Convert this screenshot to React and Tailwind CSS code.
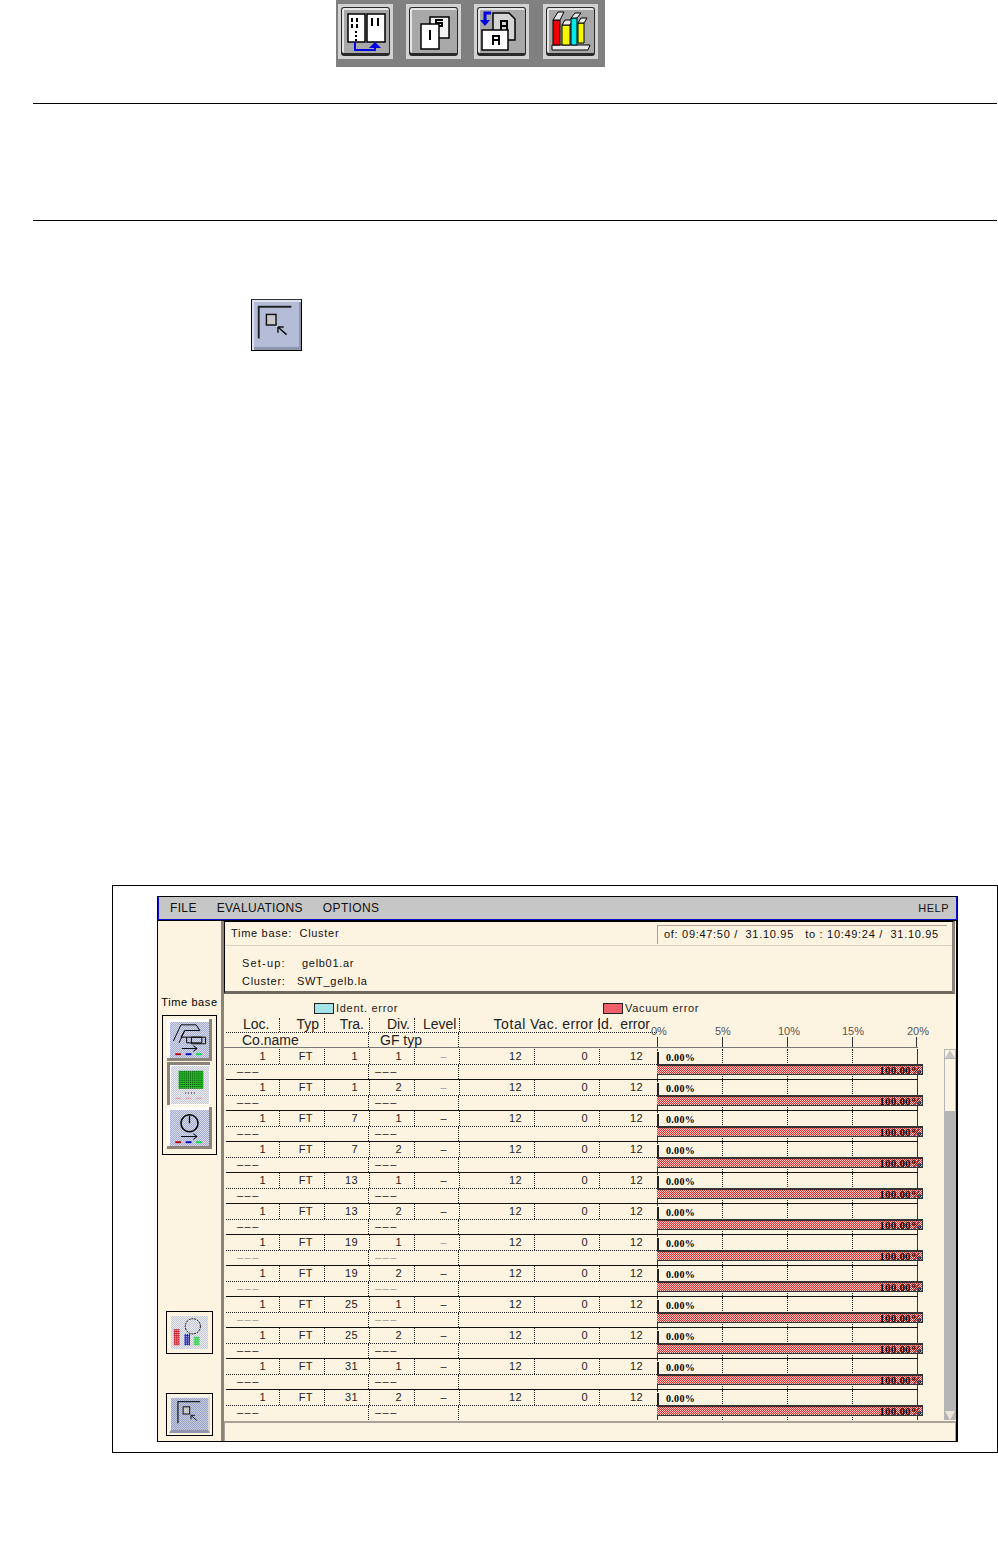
const rows = [
  ["1", "1", "1"], ["1", "1", "2"], ["1", "7", "1"], ["1", "7", "2"],
  ["1", "13", "1"], ["1", "13", "2"], ["1", "19", "1"], ["1", "19", "2"],
  ["1", "25", "1"], ["1", "25", "2"], ["1", "31", "1"], ["1", "31", "2"],
];

const font = "font-['Liberation_Sans',Arial,sans-serif]";
const checker = "bg-[repeating-conic-gradient(#e8262a_0_25%,#fbd0c8_0_50%)] bg-[length:2px_2px]";
const blueDither = "bg-[repeating-conic-gradient(#a4aed6_0_25%,#d6d8e4_0_50%)] bg-[length:2px_2px]";
const paleDither = "bg-[repeating-conic-gradient(#c2c8e2_0_25%,#eeeae6_0_50%)] bg-[length:2px_2px]";
const darkDither = "bg-[repeating-conic-gradient(#98a4cc_0_25%,#c4cad8_0_50%)] bg-[length:2px_2px]";

// whole tile is drawn in the svg, 55x55 with the light frame round it
const ToolTile = ({ children, className = "" }) => (
  <svg viewBox="0 0 55 55" className={`h-[55px] w-[55px] shrink-0 ${className}`}>
    <rect width="55" height="55" fill="#d2d2d2" />
    <rect x="3" y="3" width="49" height="49" rx="3" fill="#2a2a2a" />
    <rect x="4" y="4" width="47" height="45" rx="2" fill="#e4e4e4" />
    <rect x="6" y="6" width="45" height="43" fill="#a8a8a8" />
    {children}
  </svg>
);

const ToolIcons = () => (
  <div className="ml-[336px] flex h-[67px] w-[269px] items-start gap-[13px] bg-[#808080] pl-[2px] pt-[4px]">
    <ToolTile>
      <path d="M10 10H27V38H10zM29 10H47V38H29z" fill="#fff" stroke="#000" strokeWidth="1.5" />
      <path d="M13 14h2v4h-2zM18 14h2v4h-2zM13 20h2v4h-2zM18 20h2v4h-2zM17 27h2v2h-2zM17 31h2v2h-2zM17 35h2v2h-2zM33 14h2v8h-2zM39 14h2v8h-2z" fill="#000" />
      <path d="M17 38V46H37V42" fill="none" stroke="#0000e0" strokeWidth="2" />
      <path d="M31 44L37 38L43 44z" fill="#0000e0" />
    </ToolTile>
    <ToolTile>
      <path d="M24 13H43V34H24z" fill="#f0f0f0" stroke="#000" strokeWidth="1.5" />
      <path d="M29 15h8v2h-6v1h6v5h-8v-2h6v-1h-6z" fill="#000" />
      <path d="M15 20H33V45H15z" fill="#fff" stroke="#000" strokeWidth="1.5" />
      <path d="M23 26h2v10h-2z" fill="#000" />
    </ToolTile>
    <ToolTile>
      <path d="M19 9H35L41 15V36H19z" fill="#d4d4d4" stroke="#000" strokeWidth="1.5" />
      <path d="M26 16h8v12h-2v-5h-4v5h-2zM28 18v3h4v-3z" fill="#000" />
      <path d="M8 26H34V46H8z" fill="#fff" stroke="#000" strokeWidth="1.5" />
      <path d="M18 31h8v10h-2v-4h-4v4h-2zM20 33v2h4v-2z" fill="#000" />
      <path d="M17 9H11V16" fill="none" stroke="#0000e0" strokeWidth="3" />
      <path d="M6 16H16L11 22z" fill="#0000e0" />
    </ToolTile>
    <ToolTile className="ml-px">
      <path d="M9 41H47L45 46H9z" fill="#e8e8e8" stroke="#000" />
      <path d="M10 16H17V41H10z" fill="#f00000" stroke="#000" />
      <path d="M10 16L15 8H21L17 16z" fill="#e8e8e8" stroke="#000" />
      <path d="M19 21H27V41H19z" fill="#f6f600" stroke="#000" />
      <path d="M19 21L22 16H30L27 21z" fill="#e8e8e8" stroke="#000" />
      <path d="M28 14H34V41H28z" fill="#00e8e8" stroke="#000" />
      <path d="M28 14L32 9H38L34 14z" fill="#e8e8e8" stroke="#000" />
      <path d="M35 19H41V39H35z" fill="#f6f600" stroke="#000" />
      <path d="M35 19L38 14H44L41 19z" fill="#e8e8e8" stroke="#000" />
    </ToolTile>
  </div>
);

const CornerGlyph = ({ className }) => (
  <svg viewBox="0 0 51 52" className={className}>
    <path d="M7 40V7H41" fill="none" stroke="#222" strokeWidth="2" />
    <rect x="15" y="15" width="10" height="11" fill="#c8c8c8" stroke="#111" strokeWidth="1.5" />
    <path d="M36 36L27 28M27 28V34M27 28H33" fill="none" stroke="#111" strokeWidth="1.5" />
  </svg>
);

const Dots = () => (
  <>
    <rect x="5" y="33" width="6" height="2" fill="#c00000" />
    <rect x="16" y="33" width="6" height="2" fill="#0000c0" />
    <rect x="27" y="33" width="6" height="2" fill="#00e040" />
  </>
);

const StackIcon = ({ pressed, children, className = "" }) => (
  <div className={pressed
    ? `h-[43px] w-[43px] self-start ml-[4px] border-t-[3px] border-l-[3px] border-[#8c8478] bg-white p-[1px] ${className}`
    : `h-[42px] w-[45px] border-r-[3px] border-b-[3px] border-[#8c8478] bg-white pl-[3px] pt-[3px] ${className}`}>
    <div className={`h-full w-full ${pressed ? paleDither : blueDither}`}>
      <svg viewBox="0 0 40 38" className="h-full w-full">{children}</svg>
    </div>
  </div>
);

const Sidebar = () => (
  <div className="flex w-[66px] shrink-0 flex-col items-center border-r-[3px] border-[#8c8478] bg-[#fdf3e1] pt-[75px]">
    <div className="text-[11px] leading-[13px] tracking-[0.6px] whitespace-nowrap text-black">Time base</div>
    <div className="mt-[6px] flex h-[140px] w-[55px] flex-col items-center border border-black pt-[3px]">
      <StackIcon>
        <path d="M3 20L11 3H27L31 9H15L9 22M15 9L11 16H33V22H17V16M22 16H37V23H22z" fill="none" stroke="#000" strokeWidth="1" />
        <path d="M12 28H28M24 25L28 28L24 31" fill="none" stroke="#000" />
        <Dots />
      </StackIcon>
      <StackIcon pressed className="mt-[1px]">
        <defs>
          <pattern id="greenDots" width="2" height="2" patternUnits="userSpaceOnUse">
            <rect width="2" height="2" fill="#24c024" />
            <rect width="1" height="1" fill="#0c3c10" />
          </pattern>
        </defs>
        <rect x="8" y="4" width="26" height="19" fill="url(#greenDots)" />
        <path d="M15 27h1v1h-1zM18 27h1v1h-1zM21 27h1v1h-1zM24 27h1v1h-1z" fill="#000" />
        <path d="M5 33h5M16 33h5M27 33h5" stroke="#e06070" strokeDasharray="1 1" />
      </StackIcon>
      <StackIcon className="mt-[2px]">
        <circle cx="20" cy="14" r="9" fill="none" stroke="#000" strokeWidth="1.6" />
        <path d="M20 14V6" stroke="#000" strokeWidth="1.4" />
        <path d="M11 28H28M24 25L28 28L24 31" fill="none" stroke="#000" />
        <Dots />
      </StackIcon>
    </div>
    <div className="flex-1" />
    <div className="h-[43px] w-[47px] border border-black bg-[#fdf3e1] p-[4px]">
      <div className={`h-full w-full ${paleDither}`}>
        <svg viewBox="0 0 39 33" className="h-full w-full">
          <defs>
            <pattern id="redDots" width="2" height="2" patternUnits="userSpaceOnUse">
              <rect width="2" height="2" fill="#d02030" />
              <rect width="1" height="1" fill="#f0e0e0" />
            </pattern>
            <pattern id="blueDots" width="2" height="2" patternUnits="userSpaceOnUse">
              <rect width="2" height="2" fill="#2020c0" />
              <rect width="1" height="1" fill="#e0e0f0" />
            </pattern>
            <pattern id="limeDots" width="2" height="2" patternUnits="userSpaceOnUse">
              <rect width="2" height="2" fill="#20d040" />
              <rect width="1" height="1" fill="#e0f0e0" />
            </pattern>
          </defs>
          <circle cx="23" cy="10" r="8" fill="none" stroke="#000" strokeDasharray="2 1" />
          <rect x="3" y="13" width="6" height="17" fill="url(#redDots)" />
          <rect x="14" y="18" width="6" height="12" fill="url(#blueDots)" />
          <rect x="24" y="21" width="6" height="9" fill="url(#limeDots)" />
        </svg>
      </div>
    </div>
    <div className="mt-[39px] mb-[5px] h-[43px] w-[47px] border border-black bg-[#fdf3e1] p-[2px]">
      <div className={`flex h-full w-full items-center justify-center border-t-[2px] border-l-[2px] border-r-[2px] border-b-[3px] border-t-[#f2efe8] border-l-[#f2efe8] border-r-[#d8d6d0] border-b-[#8f96ae] ${darkDither}`}>
        <CornerGlyph className="h-[34px] w-[34px]" />
      </div>
    </div>
  </div>
);

const cell = "border-r border-dotted border-[#222]";

const Chart = () => (
  <div className="relative w-[261px] shrink-0">
    <div className="flex h-[30px] border-r border-l border-[#333]">
      <div className="h-full w-[65px] border-r border-dotted border-[#222]" />
      <div className="h-full w-[65px] border-r border-dotted border-[#222]" />
      <div className="h-full w-[65px] border-r border-dotted border-[#222]" />
    </div>
    <div className="absolute left-0 top-[2px] flex items-center bg-[#fdf3e1]">
      <div className="h-[12px] w-[2px] bg-[#222]" />
      <span className="ml-[7px] font-['Liberation_Serif',serif] text-[10px] leading-[13px] font-bold tracking-[0.3px] text-black">0.00%</span>
    </div>
    <div className={`absolute left-0 top-[15px] h-[11px] w-[266px] border-t-[2px] border-r border-b border-[#333] ${checker} text-right font-['Liberation_Serif',serif] text-[11px] leading-[9px] font-bold tracking-[0.2px] text-black`}>100.00%</div>
  </div>
);

const Row = ({ loc, tra, div, index }) => {
  const dimDash = index >= 6 && index <= 8;
  const dimLevel = index < 2 || index === 6;
  return (
    <div className={`ml-[2px] flex h-[31px] border-t ${index === 0 ? "border-transparent" : "border-[#111]"}`}>
      <div className="w-[431px] shrink-0 text-[11px] tracking-[0.4px] text-[#222]">
        <div className="flex h-[16px] items-center border-b border-dotted border-[#222]">
          <div className={`h-full w-[54px] pr-[13px] text-right leading-[15px] ${cell}`}>{loc}</div>
          <div className={`h-full w-[45px] pr-[11px] text-right leading-[15px] ${cell}`}>FT</div>
          <div className={`h-full w-[45px] pr-[11px] text-right leading-[15px] ${cell}`}>{tra}</div>
          <div className={`h-full w-[45px] pr-[12px] text-right leading-[15px] ${cell}`}>{div}</div>
          <div className={`h-full w-[45px] pr-[12px] text-right leading-[15px] ${cell} ${dimLevel ? "text-[#999]" : ""}`}>–</div>
          <div className={`h-full w-[75px] pr-[12px] text-right leading-[15px] ${cell}`}>12</div>
          <div className={`h-full w-[65px] pr-[11px] text-right leading-[15px] ${cell}`}>0</div>
          <div className="h-full flex-1 pr-[14px] text-right leading-[15px]">12</div>
        </div>
        <div className={`flex h-[14px] tracking-[1.5px] ${dimDash ? "text-[#999]" : ""}`}>
          <div className={`h-full w-[143px] pl-[11px] leading-[13px] ${cell}`}>–––</div>
          <div className={`h-full w-[90px] pl-[6px] leading-[13px] ${cell}`}>–––</div>
        </div>
      </div>
      <Chart />
    </div>
  );
};

const Scrollbar = () => (
  <div className="ml-[26px] mt-[55px] flex h-[371px] w-[12px] flex-col bg-[#b5b5b5]">
    <div className="flex h-[10px] items-center justify-center border border-[#b5b5b5] bg-[#fdf3e1]">
      <div className="h-0 w-0 border-x-[5px] border-b-[8px] border-x-transparent border-b-[#c6c6c6]" />
    </div>
    <div className="h-[53px] border-x border-b border-[#b5b5b5] bg-[#fdf3e1]" />
    <div className="flex-1" />
    <div className="flex h-[10px] items-center justify-center">
      <div className="h-0 w-0 border-x-[5px] border-t-[9px] border-x-transparent border-t-[#ece6d8]" />
    </div>
  </div>
);

const Window = () => (
  <div className="ml-[44px] mt-[10px] flex h-[546px] w-[801px] flex-col border border-black bg-[#fdf3e1] text-black shadow-[inset_-1px_0_0_#000]">
    <div className="flex h-[23px] shrink-0 items-center border-x border-b border-[#1010d0] bg-[#c6c6c6] pl-[11px] pr-[7px] text-[12px] tracking-[0.35px] text-[#111]">
      <span>FILE</span>
      <span className="ml-[20px]">EVALUATIONS</span>
      <span className="ml-[20px]">OPTIONS</span>
      <span className="ml-auto text-[11px] tracking-[0.5px]">HELP</span>
    </div>
    <div className="flex min-h-0 flex-1 border-t border-black">
      <Sidebar />
      <div className="flex min-w-0 flex-1 flex-col">
        <div className="mr-[2px] h-[73px] shrink-0 border-t border-l border-black border-r-[3px] border-r-[#8c8478] border-b-[3px] border-b-[#6e685e]">
          <div className="flex h-[24px] items-center border-b border-[#d8d2c4] pl-[6px] text-[11px] tracking-[0.7px] text-[#111]">
            <span>Time base:&nbsp; Cluster</span>
            <div className="ml-auto mr-[5px] mt-[2px] h-[19px] w-[290px] border-l border-t border-[#a8a298] pl-[6px] leading-[17px] tracking-[0.7px] whitespace-pre">of: 09:47:50 /  31.10.95   to : 10:49:24 /  31.10.95</div>
          </div>
          <div className="pl-[17px] pt-[8px] text-[11px] leading-[18px] tracking-[0.7px] text-[#111]">
            <div className="flex"><span className="w-[60px] tracking-[1.2px]">Set-up:</span><span>gelb01.ar</span></div>
            <div className="flex"><span className="w-[55px]">Cluster:</span><span>SWT_gelb.la</span></div>
          </div>
        </div>
        <div className="flex">
          <div className="w-[694px] shrink-0">
            <div className="mt-[7px] flex h-[14px] items-center pl-[90px] text-[11px] leading-[14px] tracking-[0.7px] text-[#222]">
              <div className="h-[11px] w-[20px] border border-[#222] bg-[#a4e4e8]" />
              <span className="ml-[2px] w-[267px]">Ident. error</span>
              <div className="h-[11px] w-[20px] border border-[#222] bg-[#f06068]" />
              <span className="ml-[2px]">Vacuum error</span>
            </div>
            <div className="mt-[3px] flex h-[30px] border-b border-[#777]">
              <div className="w-[433px] shrink-0 pl-[2px] text-[14px] leading-[13px] whitespace-nowrap text-[#222]">
                <div className="flex h-[15px] border-b border-dotted border-[#222]">
                  <div className={`w-[54px] pl-[17px] ${cell}`}>Loc.</div>
                  <div className={`w-[45px] pr-[5px] text-right ${cell}`}>Typ</div>
                  <div className={`w-[45px] pr-[5px] text-right ${cell}`}>Tra.</div>
                  <div className={`w-[45px] pr-[4px] text-right ${cell}`}>Div.</div>
                  <div className={`w-[45px] pl-[8px] ${cell}`}>Level</div>
                  <div className="w-[75px] pr-[9px] text-right tracking-[0.6px]">Total</div>
                  <div className={`w-[65px] tracking-[0.3px] ${cell}`}><span className="ml-[-5px] block">Vac. error</span></div>
                  <div className="flex-1"><span className="ml-[-3px] block">Id.&nbsp; error</span></div>
                </div>
                <div className="flex h-[14px] leading-[14px]">
                  <div className={`w-[143px] pl-[16px] ${cell}`}>Co.name</div>
                  <div className={`w-[90px] pl-[11px] ${cell}`}>GF typ</div>
                </div>
              </div>
              <div className="relative w-[261px]">
                <div className="absolute bottom-0 left-0 flex h-[10px]">
                  <div className="h-full w-[65px] border-l border-[#333]" />
                  <div className="h-full w-[65px] border-l border-[#333]" />
                  <div className="h-full w-[65px] border-l border-[#333]" />
                  <div className="h-full w-[65px] border-l border-r border-[#333]" />
                </div>
                <div className="text-[11px] leading-[12px] text-[#555]">
                  <span className="absolute left-[-6px] top-[7px]">0%</span>
                  <span className="absolute left-[58px] top-[7px]">5%</span>
                  <span className="absolute left-[121px] top-[7px]">10%</span>
                  <span className="absolute left-[185px] top-[7px]">15%</span>
                  <span className="absolute left-[250px] top-[7px]">20%</span>
                </div>
              </div>
            </div>
            <div>
              {rows.map((r, i) => <Row key={i} index={i} loc={r[0]} tra={r[1]} div={r[2]} />)}
            </div>
          </div>
          <Scrollbar />
        </div>
        <div className="mt-auto mr-[1px] h-[20px] border-t-[2px] border-l border-r border-[#a8a298]" />
      </div>
    </div>
  </div>
);

export default function App() {
  return (
    <div className={`h-[1560px] w-[998px] overflow-hidden bg-white ${font}`}>
      <ToolIcons />
      <div className="ml-[33px] mt-[36px] h-[118px] w-[964px] border-y border-black" />
      <div className="ml-[251px] mt-[78px] h-[52px] w-[51px] border border-black border-t-[#333] bg-[#b4bcd8] shadow-[inset_2px_2px_0_#dfe3f0,inset_-2px_-3px_0_#8e94ac]">
        <CornerGlyph className="h-full w-full" />
      </div>
      <div className="ml-[112px] mt-[534px] h-[568px] w-[886px] overflow-hidden border border-black">
        <Window />
      </div>
    </div>
  );
}
